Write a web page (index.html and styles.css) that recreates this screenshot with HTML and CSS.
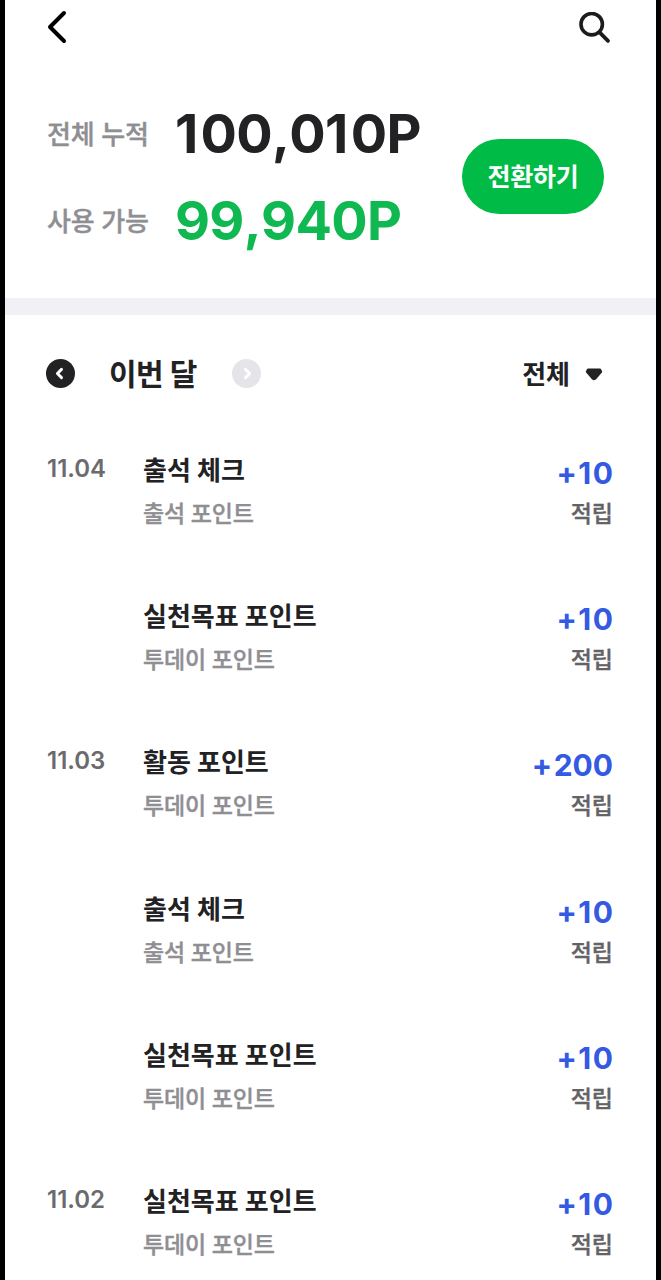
FILE: index.html
```html
<!DOCTYPE html>
<html lang="ko">
<head>
<meta charset="utf-8">
<title>포인트</title>
<link rel="stylesheet" href="styles.css">
</head>
<body>
<main class="screen">
  <header class="topbar">
    <svg class="back" viewBox="0 0 20 34" width="20" height="34"><path d="M17 3 3 17l14 14" fill="none" stroke="#000" stroke-width="4" stroke-linecap="round" stroke-linejoin="round"/></svg>
    <svg class="search" viewBox="0 0 32 32" width="32" height="32"><circle cx="12.7" cy="12.2" r="10.7" fill="none" stroke="#1c1c1e" stroke-width="3.6"/><path d="M20.6 20.3 29 28.800" fill="none" stroke="#1c1c1e" stroke-width="3.8" stroke-linecap="round"/></svg>
  </header>
  <section class="summary">
    <dl class="totals">
      <div class="total"><dt>전체 누적</dt><dd><span class="one">1</span>00,0<span class="one">1</span>0P</dd></div>
      <div class="total available"><dt>사용 가능</dt><dd>99,940P</dd></div>
    </dl>
    <button class="convert">전환하기</button>
  </section>
  <nav class="filter">
    <svg class="arrow" viewBox="0 0 29 29" width="29" height="29"><circle cx="14.5" cy="14.5" r="14.5" fill="#222224"/><path d="m15.500 10.400-4.100 4.100 4.100 4.100" fill="none" stroke="#fff" stroke-width="2.900" stroke-linecap="round" stroke-linejoin="round"/></svg>
    <h1 class="month">이번 달</h1>
    <svg class="arrow" viewBox="0 0 29 29" width="29" height="29"><circle cx="14.5" cy="14.5" r="14.5" fill="#e5e5e9"/><path d="m13.500 10.400 4.100 4.100-4.100 4.100" fill="none" stroke="#fff" stroke-width="2.900" stroke-linecap="round" stroke-linejoin="round"/></svg>
    <span class="kind">전체</span>
    <svg class="caret" viewBox="0 0 18 13" width="18" height="13"><path d="M3 1.700h12l1 2-6 6.900q-1 .8-2 0L2 3.700Z" fill="#222224" stroke="#222224" stroke-width="2.400" stroke-linejoin="round"/></svg>
  </nav>
  <ul class="history">
    <li class="entry"><time class="date">11.04</time><div class="what"><strong>출석 체크</strong><span>출석 포인트</span></div><div class="amount"><b><i>+</i><i>1</i>0</b><span>적립</span></div></li>
    <li class="entry"><time class="date"></time><div class="what"><strong>실천목표 포인트</strong><span>투데이 포인트</span></div><div class="amount"><b><i>+</i><i>1</i>0</b><span>적립</span></div></li>
    <li class="entry"><time class="date">11.03</time><div class="what"><strong>활동 포인트</strong><span>투데이 포인트</span></div><div class="amount"><b><i>+</i>200</b><span>적립</span></div></li>
    <li class="entry"><time class="date"></time><div class="what"><strong>출석 체크</strong><span>출석 포인트</span></div><div class="amount"><b><i>+</i><i>1</i>0</b><span>적립</span></div></li>
    <li class="entry"><time class="date"></time><div class="what"><strong>실천목표 포인트</strong><span>투데이 포인트</span></div><div class="amount"><b><i>+</i><i>1</i>0</b><span>적립</span></div></li>
    <li class="entry"><time class="date">11.02</time><div class="what"><strong>실천목표 포인트</strong><span>투데이 포인트</span></div><div class="amount"><b><i>+</i><i>1</i>0</b><span>적립</span></div></li>
  </ul>
</main>
</body>
</html>
```
FILE: styles.css
```css
* { box-sizing: border-box; margin: 0; padding: 0; }
html, body { height: 1280px; overflow: hidden; background: #000; }
body { font-family: Inter, "Noto Sans CJK KR", sans-serif; font-feature-settings: "calt" 0; color: #222224; }
.screen { height: 1280px; margin: 0 5px; background: #fff; overflow: hidden; }
.topbar { display: flex; justify-content: space-between; padding: 10px 45px 0 42px; height: 90px; }
.search { margin-top: 2px; }
.summary { display: flex; justify-content: space-between; height: 225px; padding: 0 52px 0 42px; border-bottom: 17px solid #f0f0f5; }
.total { display: flex; height: 87px; line-height: 87px; }
.total dt { width: 128px; padding-top: 1px; font-size: 26px; font-weight: 500; letter-spacing: -0.2px; color: #8e8e93; -webkit-text-stroke: 0.4px #8e8e93; white-space: nowrap; }
.total dd { font-size: 54px; font-weight: 700; font-kerning: none; letter-spacing: -0.7px; white-space: nowrap; }
.total .one { margin-right: 3px; }
.available dd { color: #0fb850; }
.convert { width: 142px; height: 75px; margin-top: 49px; padding-top: 1px; border: 0; border-radius: 38px; background: #00bb46; color: #fff; font: 700 25px/74px Inter, "Noto Sans CJK KR", sans-serif; letter-spacing: -0.3px; white-space: nowrap; }
.filter { display: flex; align-items: center; height: 117px; padding: 0 52px 0 41px; }
.month { width: 122px; margin-left: 34px; margin-right: 1px; font-size: 30px; font-weight: 700; letter-spacing: -0.5px; line-height: 40px; white-space: nowrap; }
.arrow { flex: none; }
.kind { margin-left: auto; padding-top: 2px; font-size: 26px; font-weight: 700; line-height: 40px; }
.caret { margin-left: 15px; margin-right: 1px; margin-top: 1px; }
.history { list-style: none; padding: 19px 43px 0 42px; }
.entry { display: flex; height: 146.2px; }
.date { width: 96px; font-size: 24px; font-weight: 600; line-height: 36px; color: #6b6b6e; }
.what { display: flex; flex-direction: column; flex: 1; padding-top: 1px; white-space: nowrap; }
.what strong { font-size: 26px; font-weight: 700; line-height: 38px; }
.what span { margin-top: 5px; font-size: 23px; font-weight: 500; letter-spacing: -0.2px; line-height: 38px; color: #8e8e93; -webkit-text-stroke: 0.4px #8e8e93; }
.amount { display: flex; flex-direction: column; align-items: flex-end; white-space: nowrap; }
.amount b { font-size: 30px; font-weight: 700; font-kerning: none; line-height: 44px; color: #3459e3; }
.amount i { font-style: normal; margin-right: 1.5px; }
.amount span { font-size: 23px; font-weight: 500; line-height: 38px; color: #636366; -webkit-text-stroke: 0.4px #636366; }
```
